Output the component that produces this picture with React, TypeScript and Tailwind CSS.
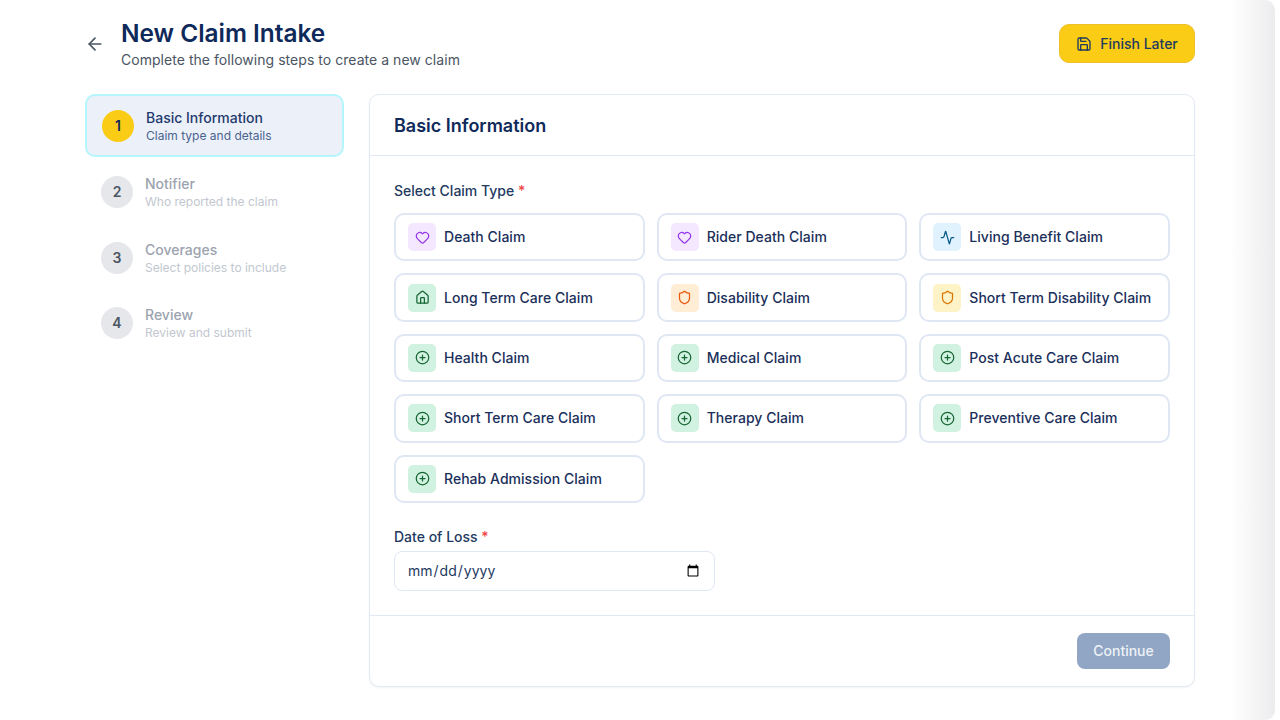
import React from "react";
import { ArrowLeft, Save, Heart, Activity, House, Shield, CirclePlus } from "lucide-react";

const purple = { box: "bg-[#f3e8ff]", icon: "text-[#9333ea]", I: Heart };
const green = { box: "bg-[#d1f2e0]", icon: "text-[#166534]", I: CirclePlus };
const types = [
  { label: "Death Claim", ...purple },
  { label: "Rider Death Claim", ...purple },
  { label: "Living Benefit Claim", box: "bg-[#e0f2fe]", icon: "text-[#075985]", I: Activity },
  { label: "Long Term Care Claim", ...green, I: House },
  { label: "Disability Claim", box: "bg-[#ffedd5]", icon: "text-[#ea580c]", I: Shield },
  { label: "Short Term Disability Claim", box: "bg-[#fef3c7]", icon: "text-[#d97706]", I: Shield },
  { label: "Health Claim", ...green },
  { label: "Medical Claim", ...green },
  { label: "Post Acute Care Claim", ...green },
  { label: "Short Term Care Claim", ...green },
  { label: "Therapy Claim", ...green },
  { label: "Preventive Care Claim", ...green },
  { label: "Rehab Admission Claim", ...green },
];

const steps = [
  { n: 2, t: "Notifier", s: "Who reported the claim" },
  { n: 3, t: "Coverages", s: "Select policies to include" },
  { n: 4, t: "Review", s: "Review and submit" },
];

export default function App() {
  return (
    <div className="h-[720px] w-[1280px] overflow-hidden bg-white font-['Inter',sans-serif]">
      <div className="h-[720px] w-[1275px] rounded-r-[10px] bg-[linear-gradient(to_right,#ffffff_96.5%,#ececee_100%)] pl-[85px] pr-[80px]">
        <header className="flex h-[94px] items-start justify-between">
          <div className="flex items-center pt-[17px]">
            <ArrowLeft className="mr-[16px] h-5 w-5 text-[#4b5563]" strokeWidth={2} />
            <div>
              <h1 className="text-[24.4px] font-semibold leading-8 text-[#0f2a5a]">New Claim Intake</h1>
              <p className="mt-[1px] text-sm leading-5 tracking-[0.04px] text-[#4b5563]">Complete the following steps to create a new claim</p>
            </div>
          </div>
          <button className="mt-[24px] flex h-[38.5px] w-[136px] items-center justify-center gap-2 rounded-[10px] border border-[#eec02a] bg-[#facc15] pt-[1px] text-sm font-medium text-[#1e3a5f]">
            <Save className="h-4 w-4" strokeWidth={2} />
            Finish Later
          </button>
        </header>
        <div className="flex gap-[25px]">
          <aside className="flex w-[259px] shrink-0 flex-col gap-[1.5px]">
            <div className="mb-[1.5px] flex h-[63px] items-center gap-3 rounded-[10px] border-2 border-[#b5f5fc] bg-[#ecf0f8] pl-[15px]">
              <div className="flex h-8 w-8 items-center justify-center rounded-full bg-[#facc15] text-sm font-semibold text-[#0f2a5a]">1</div>
              <div>
                <div className="text-sm font-medium leading-5 text-[#1e3a6e]">Basic Information</div>
                <div className="text-xs leading-4 text-[#4a6490]">Claim type and details</div>
              </div>
            </div>
            {steps.map((s) => (
              <div key={s.n} className="flex h-[64px] items-center gap-3 pl-[16px]">
                <div className="flex h-8 w-8 items-center justify-center rounded-full bg-[#e5e7eb] text-sm font-semibold text-[#4b5563]">{s.n}</div>
                <div>
                  <div className="text-sm font-medium leading-5 text-[#9ca3af]">{s.t}</div>
                  <div className="text-xs leading-4 text-[#c2c7cf]">{s.s}</div>
                </div>
              </div>
            ))}
          </aside>
          <main className="h-[593px] w-[826px] rounded-[10px] border border-[#e2e9f6] bg-white shadow-xs">
            <div className="flex h-[61px] items-center border-b border-[#e2e9f6] px-6 pt-[2px]">
              <h2 className="text-lg font-semibold text-[#0f2a5a]">Basic Information</h2>
            </div>
            <div className="h-[459px] px-6 pt-[25px]">
              <div className="text-sm font-medium leading-5 text-[#1e3a5f]">
                Select Claim Type <span className="text-[#ef4444]">*</span>
              </div>
              <div className="mt-3 grid grid-cols-3 gap-x-3 gap-y-3">
                {types.map(({ label, box, icon, I }) => (
                  <button key={label} className="flex h-[48.4px] items-center gap-2 rounded-[10px] border-2 border-[#e0e7f4] bg-white pl-3 text-left">
                    <span className={`flex h-7 w-7 items-center justify-center rounded-[5px] ${box}`}>
                      <I className={`h-[15px] w-[15px] ${icon}`} strokeWidth={2} />
                    </span>
                    <span className="text-sm font-medium tracking-[0.03px] text-[#1a2f5a]">{label}</span>
                  </button>
                ))}
              </div>
              <label className="mt-6 block text-sm font-medium leading-5 text-[#1e3a5f]">
                Date of Loss <span className="text-[#ef4444]">*</span>
              </label>
              <input type="date" className="mt-1 block h-10 w-[321px] rounded-lg border border-[#e0e7f4] bg-white px-3 text-sm text-[#1e3a5f] outline-none" />
            </div>
            <div className="flex h-[71px] items-start justify-end border-t border-[#e2e9f6] px-6 pt-[17px]">
              <button className="h-[36px] w-[93px] rounded-lg bg-[#90a6c4] text-sm font-medium text-[#eef2f7]">Continue</button>
            </div>
          </main>
        </div>
      </div>
    </div>
  );
}
